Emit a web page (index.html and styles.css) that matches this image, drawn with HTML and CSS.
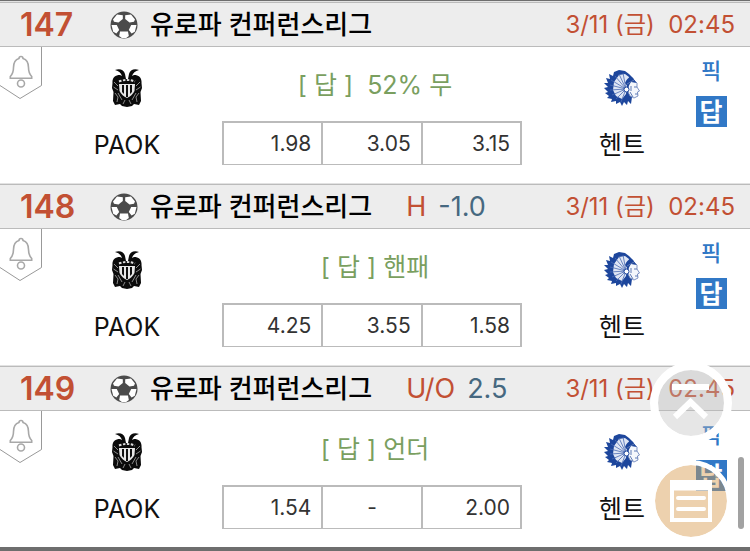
FILE: index.html
```html
<!DOCTYPE html>
<html lang="ko">
<head>
  <meta charset="UTF-8" />
  <meta name="viewport" content="width=device-width, initial-scale=1.0" />
  <title>유로파 컨퍼런스리그</title>
  <link rel="stylesheet" href="styles.css">
</head>
<body>
  <!-- shared icons -->
  <svg class="sprite" aria-hidden="true">
    <symbol id="ball" viewBox="0 0 28 28">
      <circle cx="14" cy="14" r="13.5" fill="#4b4b4b" />
      <g fill="#fff">
        <path d="M7 3.600 12.800 4.200 12.800 8 8.500 11.500 4 10.800 3 8.600Z" />
        <path d="M21 3.600 15.200 4.200 15.200 8 19.500 11.500 24 10.800 25 8.600Z" />
        <path d="M1.500 14 6.800 14 9.200 19 6.400 22.600 3.200 20.800Z" />
        <path d="M26.500 14 21.200 14 18.800 19 21.600 22.600 24.800 20.800Z" />
        <path d="M10 20.500H18L18.800 25 16.200 27H11.800L9.200 25Z" />
      </g>
    </symbol>

    <symbol id="bell" viewBox="0 0 42 53">
      <path d="M41.5 0V38.5L20 51.5 0 38.5" fill="#fff" stroke="#999" />
      <g fill="none" stroke="#a8a8a8" stroke-width="1.6">
        <path d="M19 11.5a2 2 0 0 1 4 0c4 1.200 5.500 4.500 5.500 9 0 5 .8 6.500 3.200 9v1.800H10.300V29.500c2.400-2.500 3.200-4 3.200-9 0-4.500 1.500-7.800 5.500-9Z" />
        <circle cx="21" cy="36.500" r="3.500" />
      </g>
    </symbol>

    <symbol id="paok" viewBox="0 0 30 38">
      <path d="M3 1C8-1 12 1 13 5L14 10H16L17 5C18 1 22-1 27 1 23 2 21 4 20 7L22 6C27 6 30 9 29.500 14L30 19 28.500 23 29 32 27 36 22 35 20 37 15 38 10 37 8 35 3 36 1 32 1.500 23 0 19 .5 14C0 9 3 6 8 6L10 7C9 4 7 2 3 1Z" fill="#0b0b0b" />
      <path d="M7 15H23L22.500 22Q20 27 15 29 10 27 7.500 22Z" fill="#e8e8e8" />
      <path d="M10 16H12V25L10 23ZM14 16H16V28H14ZM18 16H20V23L18 25Z" fill="#111" />
      <path d="M7 12.500Q15 9.500 23 12.500" fill="none" stroke="#ddd" stroke-width="2" stroke-dasharray="2.500 1.500" />
      <g fill="none" stroke="#999" stroke-width=".9">
        <path d="M2 13 6 17M1.500 18 6 21M3 24 6 28 5 33M6 24 10 31M28 13 24 17M28.500 18 24 21M27 24 24 28 25 33M24 24 20 31M13 31 11 35M17 31 19 35" />
      </g>
    </symbol>

    <symbol id="gent" viewBox="0 0 36 36">
      <path d="M10 2 15 0 21 1 25 4 29 8 31 14 29 19 26 22 28 27 27 34 24 31 23 35 20 32 18 36 16 32 12 34 12 31 7 32 8 29 3 28 5 26 1 23 4 22 0 18 4 17 0 13 4 13 2 8 6 9 5 4 9 6Z" fill="#1d469c" />
      <path d="M15 5 21 4 25 7 23 15 22 24 18 29 12 26 9 20 10 12Z" fill="#dfe6f4" />
      <g stroke="#4a6bb3" stroke-width=".8">
        <path d="M22 19 11 6M22 19 15 4M22 19 19 3M22 19 7 10M22 19 6 15M22 19 6 20M22 19 8 25M22 19 12 29M22 19 17 32" />
      </g>
      <path d="M25 11 30 10 33 13 33 17 35.500 21 33.500 22 34 26 30 28 26 26 24 22Z" fill="#f4f7fc" stroke="#5f7ab5" stroke-width=".8" />
      <path d="M21 13Q24 6 29 8L32.500 13 27 12 24 17Z" fill="#1d469c" />
      <path d="M23 14 30 10M30 17H33M31 24H34M26 22 29 27M27 16V21" stroke="#5f7ab5" />
      <circle cx="22.500" cy="19.500" r="2.500" fill="#fff" stroke="#1d469c" />
    </symbol>
  </svg>

  <main class="match-list">
    <article class="match">
      <header class="match-header">
        <span class="number">147</span>
        <svg class="ball"><use href="#ball" /></svg>
        <h2 class="league">유로파 컨퍼런스리그</h2>
        <time class="date">3/11 (금)&nbsp; 02:45</time>
      </header>
      <div class="match-body">
        <button class="alarm" aria-label="알림"><svg><use href="#bell" /></svg></button>
        <div class="team">
          <svg class="logo-paok"><use href="#paok" /></svg>
          <span class="team-name">PAOK</span>
        </div>
        <div class="center">
          <p class="answer">[ 답 ]&nbsp; 52% 무</p>
          <div class="odds">
            <button>1.98</button>
            <button>3.05</button>
            <button>3.15</button>
          </div>
        </div>
        <div class="team away">
          <svg class="logo-gent"><use href="#gent" /></svg>
          <span class="team-name">헨트</span>
        </div>
        <div class="picks">
          <button class="pick">픽</button>
          <button class="reply">답</button>
        </div>
      </div>
    </article>

    <article class="match">
      <header class="match-header">
        <span class="number">148</span>
        <svg class="ball"><use href="#ball" /></svg>
        <h2 class="league">유로파 컨퍼런스리그</h2>
        <span class="type">H</span>
        <span class="line">-1.0</span>
        <time class="date">3/11 (금)&nbsp; 02:45</time>
      </header>
      <div class="match-body">
        <button class="alarm" aria-label="알림"><svg><use href="#bell" /></svg></button>
        <div class="team">
          <svg class="logo-paok"><use href="#paok" /></svg>
          <span class="team-name">PAOK</span>
        </div>
        <div class="center">
          <p class="answer">[ 답 ] 핸패</p>
          <div class="odds">
            <button>4.25</button>
            <button>3.55</button>
            <button>1.58</button>
          </div>
        </div>
        <div class="team away">
          <svg class="logo-gent"><use href="#gent" /></svg>
          <span class="team-name">헨트</span>
        </div>
        <div class="picks">
          <button class="pick">픽</button>
          <button class="reply">답</button>
        </div>
      </div>
    </article>

    <article class="match">
      <header class="match-header">
        <span class="number">149</span>
        <svg class="ball"><use href="#ball" /></svg>
        <h2 class="league">유로파 컨퍼런스리그</h2>
        <span class="type">U/O</span>
        <span class="line">2.5</span>
        <time class="date">3/11 (금)&nbsp; 02:45</time>
      </header>
      <div class="match-body">
        <button class="alarm" aria-label="알림"><svg><use href="#bell" /></svg></button>
        <div class="team">
          <svg class="logo-paok"><use href="#paok" /></svg>
          <span class="team-name">PAOK</span>
        </div>
        <div class="center">
          <p class="answer">[ 답 ] 언더</p>
          <div class="odds">
            <button>1.54</button>
            <button class="none">-</button>
            <button>2.00</button>
          </div>
        </div>
        <div class="team away">
          <svg class="logo-gent"><use href="#gent" /></svg>
          <span class="team-name">헨트</span>
        </div>
        <div class="picks">
          <button class="pick">픽</button>
          <button class="reply">답</button>
        </div>
      </div>
    </article>
  </main>

  <div class="floating">
    <button class="round to-top" aria-label="맨 위로">
      <svg width="40" height="40" viewBox="0 0 40 40" fill="none" stroke="#fff">
        <path d="M1 4H38" stroke-width="6" />
        <path d="M4 34 19.500 19 35 34" stroke-width="6" />
      </svg>
    </button>
    <button class="round slip" aria-label="목록">
      <svg width="42" height="42" viewBox="0 0 42 42" fill="none" stroke="#fff">
        <path d="M2 2H40V40H2Z" stroke-width="4" />
        <path d="M2 6H40" stroke-width="9" />
        <path d="M8 18H34M8 29H34" stroke-width="4" stroke-linecap="round" />
      </svg>
    </button>
  </div>
  <div class="scroll-thumb"></div>
</body>
</html>
```

FILE: styles.css
```css
* {
  box-sizing: border-box;
}

body {
  margin: 0;
  font-family: Inter, "Noto Sans CJK KR", sans-serif;
  background-color: #fff;
  color: #111;
}

button {
  font-family: inherit;
  padding: 0;
  border: none;
  background: none;
  cursor: pointer;
}

.sprite {
  position: absolute;
  width: 0;
  height: 0;
}

.match-list {
  border-top: 1px solid #6e6e6e;
  border-bottom: 4px solid #6e6e6e;
}

.match {
  border-top: 1px solid #e2e2e2;
}

.match-header {
  display: flex;
  align-items: center;
  height: 45px;
  padding: 0 15px 0 20px;
  background-color: #ededed;
  border-top: 1px solid #bbb;
  border-bottom: 1px solid #bbb;
  white-space: nowrap;
}

.number {
  width: 90px;
  font-size: 32px;
  font-weight: 600;
  color: #c25033;
}

.ball {
  width: 28px;
  height: 28px;
  margin-right: 12px;
}

.league {
  margin: 0 34px 0 0;
  font-size: 26px;
  font-weight: 500;
  line-height: 40px;
  color: #000;
}

.type {
  margin-right: 12px;
  font-size: 27px;
  color: #c25033;
}

.line {
  font-size: 27px;
  color: #466880;
}

.date {
  margin-left: auto;
  font-size: 24px;
  line-height: 40px;
  color: #c25033;
}

.match-body {
  position: relative;
  display: grid;
  grid-template-columns: 190px 1fr 150px 78px;
  height: 136px;
  padding: 12px 0 0 32px;
}

.alarm {
  position: absolute;
  top: 0;
  left: 0;
  width: 42px;
  height: 53px;
}

.alarm svg {
  display: block;
  width: 42px;
  height: 53px;
}

.team {
  display: flex;
  flex-direction: column;
  align-items: center;
  gap: 18px;
  padding-top: 10px;
}

.away {
  padding-left: 50px;
}

.logo-paok {
  width: 30px;
  height: 38px;
}

.logo-gent {
  width: 36px;
  height: 38px;
}

.team-name {
  font-size: 25px;
  line-height: 40px;
}

.center {
  padding-top: 6px;
}

.answer {
  margin: 0 0 16px;
  padding-left: 6px;
  font-size: 25px;
  line-height: 40px;
  text-align: center;
  color: #7a9f5f;
}

.odds {
  display: grid;
  grid-template-columns: 1fr 1fr 1fr;
  height: 44px;
  border: 2px solid #bbb;
  border-width: 2px 0 1px 2px;
}

.odds button {
  padding-right: 10px;
  border-right: 2px solid #bbb;
  font-size: 21px;
  text-align: right;
  color: #333;
}

.odds .none {
  padding: 0;
  text-align: center;
}

.picks {
  display: flex;
  flex-direction: column;
  align-items: center;
  gap: 13px;
}

.pick {
  height: 24px;
  font-size: 22px;
  font-weight: 500;
  line-height: 24px;
  color: #3178c6;
}

.reply {
  width: 31px;
  height: 31px;
  font-size: 25px;
  font-weight: 700;
  line-height: 30px;
  color: #fff;
  background-color: #3178c6;
}

/* buttons over the list */
.floating {
  position: fixed;
  right: 18px;
  bottom: 9px;
  display: flex;
  flex-direction: column;
  gap: 16px;
}

.round {
  display: flex;
  align-items: center;
  justify-content: center;
  width: 82px;
  height: 82px;
  border-radius: 50%;
  background-clip: padding-box;
}

.to-top {
  border: 8px solid #fff;
  background-color: rgba(187, 187, 187, 0.37);
}

.slip {
  border: 5px solid #fff;
  background-color: rgba(215, 153, 75, 0.45);
}

.scroll-thumb {
  position: fixed;
  right: 6px;
  bottom: 22px;
  width: 6px;
  height: 72px;
  border-radius: 3px;
  background-color: #a2a2a2;
}
```
